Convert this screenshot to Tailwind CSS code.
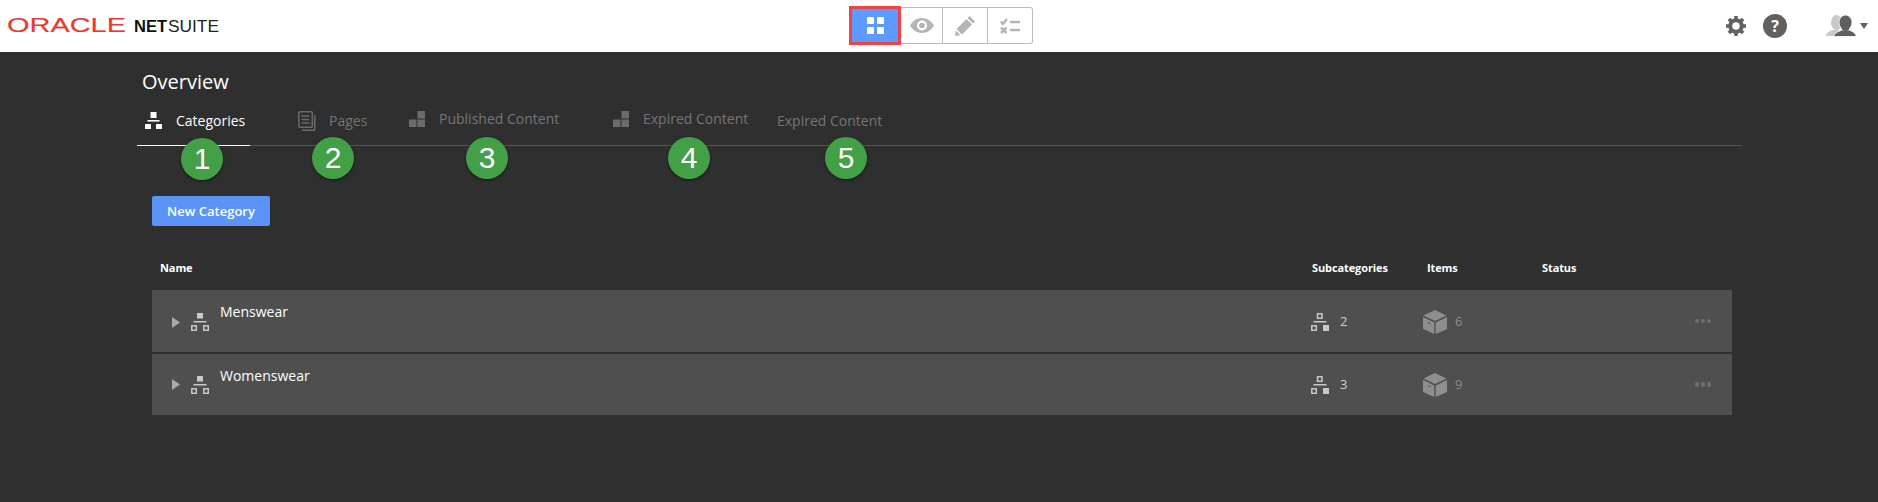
<!doctype html>
<html>
<head>
<meta charset="utf-8">
<script src="https://cdn.jsdelivr.net/npm/@tailwindcss/browser@4"></script>
</head>
<body class="m-0 h-[502px] w-[1878px] overflow-hidden bg-[#2f2f2f] font-['Open_Sans',sans-serif]">
<header class="flex h-[52px] items-start bg-white">
  <div class="w-[849px] pl-[7px] pt-[14px]">
    <svg width="230" height="22" viewBox="0 0 230 22">
      <text x="0" y="17.500" font-family="Liberation Sans" font-size="21" fill="#e8392e" stroke="#e8392e" stroke-width=".15" textLength="119" lengthAdjust="spacingAndGlyphs">ORACLE</text>
      <text x="127" y="18" font-family="Liberation Sans" font-size="16" font-weight="700" fill="#111" textLength="33" lengthAdjust="spacingAndGlyphs">NET</text>
      <text x="161" y="18" font-family="Liberation Sans" font-size="16" fill="#222" textLength="51" lengthAdjust="spacingAndGlyphs">SUITE</text>
    </svg>
  </div>
  <div class="mt-[6px] flex h-[38px] w-[184px]">
    <div class="flex h-[39px] w-[52px] items-center justify-center border-[3px] border-[#ef4444] bg-[#5c9aff]">
      <svg width="17" height="17" viewBox="0 0 17 17" fill="#fff"><rect width="7" height="7" rx=".6"/><rect x="10" width="7" height="7" rx=".6"/><rect y="10" width="7" height="7" rx=".6"/><rect x="10" y="10" width="7" height="7" rx=".6"/></svg>
    </div>
    <div class="mt-px flex h-[37px] flex-1 rounded-r-[3px] border border-l-0 border-[#bbbbbb]">
      <div class="flex w-[42px] items-center justify-center border-r border-[#bbbbbb]">
        <svg width="24" height="15" viewBox="0 0 24 15" fill="#b5b5b5"><path fill-rule="evenodd" d="M0 7.500C3 2.700 7 0 12 0s9 2.700 12 7.500C21 12.300 17 15 12 15S3 12.300 0 7.500ZM12 2.500a5 5 0 1 0 0 10 5 5 0 0 0 0-10Z"/><circle cx="12" cy="7.500" r="2.800"/></svg>
      </div>
      <div class="flex w-[45px] items-center justify-center border-r border-[#bbbbbb]">
        <svg width="20" height="20" viewBox="0 0 20 20" fill="#b5b5b5"><path d="M14.500 0 20 5.500 18 7.500 12.500 2ZM11.500 3 17 8.500 7 18.500 1.500 13ZM.8 14.500 5.500 19.200 0 20Z"/></svg>
      </div>
      <div class="flex flex-1 items-center justify-center">
        <svg width="20" height="16" viewBox="0 0 20 16" fill="none" stroke="#b5b5b5" stroke-width="2.500"><path d="M.8 3.500 3 5.800 7 1"/><path d="M1 9.500 6.500 15M6.500 9.500 1 15"/><path d="M10 4h10M10 12h10"/></svg>
      </div>
    </div>
  </div>
  <div class="flex flex-1 items-center pl-[693px] pt-[14px]">
    <svg width="20" height="20" viewBox="0 0 20 20" fill="none" stroke="#616161"><circle cx="10" cy="10" r="5.800" stroke-width="4"/><path stroke-width="3.600" d="M10 0v4M10 16v4M0 10h4M16 10h4M2.900 2.900l2.900 2.900M14.200 14.200l2.900 2.900M2.900 17.100l2.900-2.900M14.200 5.800l2.900-2.900"/></svg>
    <div class="ml-[17px] flex h-[24px] w-[24px] items-center justify-center rounded-full bg-[#616161] text-[16px] leading-none font-bold text-white">?</div>
    <svg class="ml-[39px]" width="30" height="22" viewBox="0 0 30 22"><ellipse cx="10.500" cy="7.500" rx="5.500" ry="7.500" fill="#c9c9c9"/><path fill="#c9c9c9" d="M0 21c0-3 2-4 7-6h6l-3 6Z"/><ellipse cx="19.500" cy="7.500" rx="6.500" ry="7.500" fill="#5f5f5f" stroke="#fff" stroke-width=".8"/><path fill="#5f5f5f" stroke="#fff" stroke-width=".8" d="M8 21.500c0-3 3-4.500 8-6.500h7c5 2 7 3.500 7 6.500Z"/><ellipse cx="19.500" cy="12" rx="4" ry="4" fill="#5f5f5f"/></svg>
    <svg class="ml-[4px]" width="8" height="6" viewBox="0 0 8 6" fill="#616161"><path d="M0 0h8L4 6Z"/></svg>
  </div>
</header>

<main class="pl-[137px] pr-[136px]">
  <h1 class="h-[49px] pl-[5px] pt-[16px] text-[20px] leading-[28px] font-normal text-white">Overview</h1>
  <nav class="relative flex h-[45px] border-b border-[#565656] text-[14px] leading-[20px] text-[#757575]">
    <div class="-mb-px flex w-[113px] items-center gap-[14px] border-b border-white pb-[5px] pl-[8px] text-white">
      <svg width="17" height="17" viewBox="0 0 17 17" fill="#fff"><rect x="5.500" y="0" width="6" height="6" rx=".6"/><rect x="2.500" y="8" width="12" height="1.600"/><rect x="0" y="12" width="6" height="5" rx=".6"/><rect x="11" y="12" width="6" height="5" rx=".6"/></svg>
      <span>Categories</span>
    </div>
    <div class="ml-[40px] flex w-[111px] items-center gap-[13px] pb-[5px] pl-[8px]">
      <svg width="18" height="20" viewBox="0 0 18 20" fill="none" stroke="#6b6b6b" stroke-width="1.500"><rect x=".8" y=".8" width="13.500" height="15.500" rx="1"/><path d="M16.800 4v14a1.200 1.200 0 0 1-1.200 1.200H4M3.500 5h8M3.500 8.500h8M3.500 12h8"/></svg>
      <span>Pages</span>
    </div>
    <div class="flex w-[204px] items-center gap-[14px] pb-[9px] pl-[8px]">
      <svg width="16" height="16" viewBox="0 0 16 16" fill="#6b6b6b"><rect x="8.500" width="7.500" height="7.500"/><rect y="8.500" width="7.500" height="7.500"/><rect x="8.500" y="8.500" width="7.500" height="7.500"/></svg>
      <span>Published Content</span>
    </div>
    <div class="flex w-[164px] items-center gap-[14px] pb-[9px] pl-[8px]">
      <svg width="16" height="16" viewBox="0 0 16 16" fill="#6b6b6b"><rect x="8.500" width="7.500" height="7.500"/><rect y="8.500" width="7.500" height="7.500"/><rect x="8.500" y="8.500" width="7.500" height="7.500"/></svg>
      <span>Expired Content</span>
    </div>
    <div class="flex items-center pb-[5px] pl-[8px]"><span>Expired Content</span></div>

    <div class="absolute left-[44px] top-[37px] flex h-[42px] w-[42px] items-center justify-center rounded-full bg-[#43a047] font-['Liberation_Sans'] text-[30px] leading-none text-white shadow-[0_1px_3px_rgba(0,0,0,0.5)]">1</div>
    <div class="absolute left-[175px] top-[36px] flex h-[42px] w-[42px] items-center justify-center rounded-full bg-[#43a047] font-['Liberation_Sans'] text-[30px] leading-none text-white shadow-[0_1px_3px_rgba(0,0,0,0.5)]">2</div>
    <div class="absolute left-[329px] top-[36px] flex h-[42px] w-[42px] items-center justify-center rounded-full bg-[#43a047] font-['Liberation_Sans'] text-[30px] leading-none text-white shadow-[0_1px_3px_rgba(0,0,0,0.5)]">3</div>
    <div class="absolute left-[531px] top-[36px] flex h-[42px] w-[42px] items-center justify-center rounded-full bg-[#43a047] font-['Liberation_Sans'] text-[30px] leading-none text-white shadow-[0_1px_3px_rgba(0,0,0,0.5)]">4</div>
    <div class="absolute left-[688px] top-[36px] flex h-[42px] w-[42px] items-center justify-center rounded-full bg-[#43a047] font-['Liberation_Sans'] text-[30px] leading-none text-white shadow-[0_1px_3px_rgba(0,0,0,0.5)]">5</div>
  </nav>

  <div class="ml-[15px] mr-[10px]">
    <button class="mt-[50px] block h-[30px] w-[118px] rounded-[2px] bg-[#5b94f7] pt-px text-[13px] font-semibold text-white">New Category</button>
    <div class="grid h-[64px] grid-cols-[1160px_115px_115px_1fr] items-center pt-[20px] text-[11px] font-bold tracking-[-0.1px] text-white">
      <span class="pl-[8px]">Name</span><span>Subcategories</span><span>Items</span><span>Status</span>
    </div>
    <div class="flex flex-col gap-[2px]">
      <div class="grid h-[62px] grid-cols-[1159px_112px_1fr_auto] items-center bg-[#4f4f4f] pr-[21px]">
        <div class="flex items-center pl-[20px] pt-[2px]">
          <svg width="8" height="11" viewBox="0 0 8 11" fill="#a8a8a8"><path d="M0 0l8 5.500-8 5.500Z"/></svg>
          <svg class="ml-[11px]" width="18" height="18" viewBox="0 0 18 18"><rect x="6" y="0" width="6" height="5.500" fill="#c8c8c8"/><rect x="2.500" y="8" width="13" height="1.500" fill="#c8c8c8"/><rect x=".8" y="12.800" width="4.500" height="4.500" fill="none" stroke="#c8c8c8" stroke-width="1.500"/><rect x="12.800" y="12.800" width="4.500" height="4.500" fill="none" stroke="#c8c8c8" stroke-width="1.500"/></svg>
          <span class="-mt-[20px] ml-[11px] text-[14px] leading-[20px] text-white">Menswear</span>
        </div>
        <div class="flex items-center gap-[11px] pt-[2px] text-[13px] text-[#d0d0d0]">
          <svg width="18" height="18" viewBox="0 0 18 18"><rect x="6.500" y=".8" width="4.500" height="4.500" fill="none" stroke="#c8c8c8" stroke-width="1.500"/><rect x="2.500" y="8" width="13" height="1.500" fill="#c8c8c8"/><rect x=".8" y="12.800" width="4.500" height="4.500" fill="none" stroke="#c8c8c8" stroke-width="1.500"/><rect x="12" y="12" width="6" height="6" fill="#c8c8c8"/></svg>
          <span>2</span>
        </div>
        <div class="flex items-center gap-[8px] pt-[2px] text-[13px] text-[#8c8c8c]">
          <svg width="24" height="24" viewBox="0 0 24 24" fill="#8e8e8e"><path d="M12 0 23.500 5.500 12 11 .5 5.500Z"/><path d="M0 7 11.300 12.400V24L0 19ZM24 7 12.700 12.400V24L24 19Z"/><rect x="5" y="12" width="3.500" height="1" fill="#5a5a5a" transform="rotate(24 5 12)"/></svg>
          <span>6</span>
        </div>
        <div class="flex gap-[1.500px]"><i class="h-[4.500px] w-[4.500px] rounded-full bg-[#6e6e6e]"></i><i class="h-[4.500px] w-[4.500px] rounded-full bg-[#6e6e6e]"></i><i class="h-[4.500px] w-[4.500px] rounded-full bg-[#6e6e6e]"></i></div>
      </div>
      <div class="grid h-[61px] grid-cols-[1159px_112px_1fr_auto] items-center bg-[#4f4f4f] pr-[21px]">
        <div class="flex items-center pl-[20px]">
          <svg width="8" height="11" viewBox="0 0 8 11" fill="#a8a8a8"><path d="M0 0l8 5.500-8 5.500Z"/></svg>
          <svg class="ml-[11px]" width="18" height="18" viewBox="0 0 18 18"><rect x="6" y="0" width="6" height="5.500" fill="#c8c8c8"/><rect x="2.500" y="8" width="13" height="1.500" fill="#c8c8c8"/><rect x=".8" y="12.800" width="4.500" height="4.500" fill="none" stroke="#c8c8c8" stroke-width="1.500"/><rect x="12.800" y="12.800" width="4.500" height="4.500" fill="none" stroke="#c8c8c8" stroke-width="1.500"/></svg>
          <span class="-mt-[18px] ml-[11px] text-[14px] leading-[20px] text-white">Womenswear</span>
        </div>
        <div class="flex items-center gap-[11px] text-[13px] text-[#d0d0d0]">
          <svg width="18" height="18" viewBox="0 0 18 18"><rect x="6.500" y=".8" width="4.500" height="4.500" fill="none" stroke="#c8c8c8" stroke-width="1.500"/><rect x="2.500" y="8" width="13" height="1.500" fill="#c8c8c8"/><rect x=".8" y="12.800" width="4.500" height="4.500" fill="none" stroke="#c8c8c8" stroke-width="1.500"/><rect x="12" y="12" width="6" height="6" fill="#c8c8c8"/></svg>
          <span>3</span>
        </div>
        <div class="flex items-center gap-[8px] text-[13px] text-[#8c8c8c]">
          <svg width="24" height="24" viewBox="0 0 24 24" fill="#8e8e8e"><path d="M12 0 23.500 5.500 12 11 .5 5.500Z"/><path d="M0 7 11.300 12.400V24L0 19ZM24 7 12.700 12.400V24L24 19Z"/><rect x="5" y="12" width="3.500" height="1" fill="#5a5a5a" transform="rotate(24 5 12)"/></svg>
          <span>9</span>
        </div>
        <div class="flex gap-[1.500px]"><i class="h-[4.500px] w-[4.500px] rounded-full bg-[#6e6e6e]"></i><i class="h-[4.500px] w-[4.500px] rounded-full bg-[#6e6e6e]"></i><i class="h-[4.500px] w-[4.500px] rounded-full bg-[#6e6e6e]"></i></div>
      </div>
    </div>
  </div>
</main>
</body>
</html>
